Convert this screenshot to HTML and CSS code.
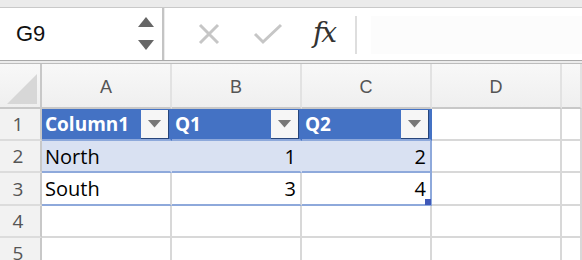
FILE: index.html
```html
<!DOCTYPE html>
<html lang="en">

<head>
    <meta charset="UTF-8">
    <meta name="viewport" content="width=device-width, initial-scale=1.0">
    <title>Sheet1</title>
    <link rel="stylesheet" href="styles.css">
</head>

<body>
    <div class="top-band"></div>

    <div class="formula-bar">
        <div class="name-box">
            <span class="cell-ref">G9</span>
            <svg class="spinner" width="18" height="36" viewBox="0 0 18 36">
                <polygon points="9,1 17,11 1,11" fill="#666" />
                <polygon points="1,24 17,24 9,34" fill="#666" />
            </svg>
        </div>
        <div class="fx-tools">
            <svg class="tool" width="26" height="26" viewBox="0 0 26 26">
                <path d="M4 4 L22 22 M22 4 L4 22" stroke="#c6c6c6" stroke-width="3" fill="none" />
            </svg>
            <svg class="tool" width="30" height="26" viewBox="0 0 30 26">
                <path d="M2 13 L10 21 L28 4" stroke="#c6c6c6" stroke-width="3" fill="none" />
            </svg>
            <span class="fx">fx</span>
        </div>
        <div class="formula-input"></div>
    </div>

    <div class="bar-rule"></div>

    <div class="sheet">
        <!-- column headers -->
        <div class="corner"><div class="corner-tri"></div></div>
        <div class="col-head">A</div>
        <div class="col-head">B</div>
        <div class="col-head">C</div>
        <div class="col-head">D</div>
        <div class="col-head"></div>

        <!-- row 1 -->
        <div class="row-head">1</div>
        <div class="cell t-head"><span>Column1</span><span class="filter"></span></div>
        <div class="cell t-head"><span>Q1</span><span class="filter"></span></div>
        <div class="cell t-head t-end"><span>Q2</span><span class="filter"></span></div>
        <div class="cell"></div>
        <div class="cell"></div>

        <!-- row 2 -->
        <div class="row-head">2</div>
        <div class="cell t-band">North</div>
        <div class="cell t-band num">1</div>
        <div class="cell t-band t-end num">2</div>
        <div class="cell"></div>
        <div class="cell"></div>

        <!-- row 3 -->
        <div class="row-head">3</div>
        <div class="cell t-row">South</div>
        <div class="cell t-row num">3</div>
        <div class="cell t-row t-end num">4<span class="handle"></span></div>
        <div class="cell"></div>
        <div class="cell"></div>

        <!-- row 4 -->
        <div class="row-head">4</div>
        <div class="cell"></div>
        <div class="cell"></div>
        <div class="cell"></div>
        <div class="cell"></div>
        <div class="cell"></div>

        <!-- row 5 -->
        <div class="row-head">5</div>
        <div class="cell"></div>
        <div class="cell"></div>
        <div class="cell"></div>
        <div class="cell"></div>
        <div class="cell"></div>
    </div>
</body>

</html>
```

FILE: styles.css
```css
body {
    margin: 0;
    width: 582px;
    height: 260px;
    overflow: hidden;
    background-color: #fff;
    font-family: "Open Sans", "Liberation Sans", sans-serif;
}

.top-band {
    height: 7px;
    background-color: #ebebeb;
    border-bottom: 1px solid #c9c9c9;
}

.formula-bar {
    height: 52px;
    display: flex;
    align-items: stretch;
    background-color: #fff;
}

.name-box {
    width: 164px;
    display: flex;
    align-items: center;
    justify-content: space-between;
    padding: 0 7px 0 16px;
    box-sizing: border-box;
    border-right: 2px solid #c4c4c4;
}

.cell-ref {
    font-family: "Liberation Sans", Arial, sans-serif;
    font-size: 22px;
    color: #111;
}

.spinner {
    margin-top: -1px;
}

.fx-tools {
    width: 191px;
    display: flex;
    align-items: center;
    padding-left: 31px;
    box-sizing: border-box;
    border-left: 1px solid #ececec;
}

.tool:first-child {
    margin-right: 31px;
}

.fx {
    margin-left: 30px;
    margin-top: -4px;
    font-family: "DejaVu Serif", "Liberation Serif", serif;
    font-style: italic;
    font-size: 28px;
    color: #333;
    letter-spacing: -2px;
}

.formula-input {
    flex: 1;
    margin: 8px 0 6px 0;
    padding-left: 14px;
    border-left: 2px solid #dedede;
    display: flex;
}

.formula-input::after {
    content: "";
    flex: 1;
    background-color: #fcfcfc;
}

.bar-rule {
    height: 2px;
    border-top: 1px solid #a9a9a9;
    border-bottom: 1px solid #bdbdbd;
    background-color: #ececec;
}

.sheet {
    display: grid;
    grid-template-columns: 42px 130px 130px 130px 130px 1fr;
    grid-template-rows: 45px 32px 32px 33px 32px 32px;
}

.corner,
.col-head,
.row-head,
.cell {
    box-sizing: border-box;
    border-right: 2px solid #d8d8d8;
    border-bottom: 2px solid #d8d8d8;
}

.corner,
.col-head {
    background: linear-gradient(#f8f8f8, #efefef);
    border-right-color: #e2e2e2;
    border-bottom-color: #c8c8c8;
}

.corner {
    border-right-color: #c8c8c8;
    display: flex;
    justify-content: flex-end;
    align-items: flex-end;
    padding: 0 3px 3px 0;
}

.corner-tri {
    width: 30px;
    height: 30px;
    background-color: #d7d7d7;
    clip-path: polygon(100% 0, 100% 100%, 0 100%);
}

.col-head {
    display: flex;
    align-items: center;
    justify-content: center;
    padding-top: 4px;
    font-family: "Liberation Sans", Arial, sans-serif;
    font-size: 18px;
    color: #555;
}

.row-head {
    background-color: #f2f2f2;
    border-right-color: #c8c8c8;
    border-bottom-color: #dcdcdc;
    display: flex;
    align-items: center;
    justify-content: center;
    padding-right: 4px;
    font-size: 19px;
    color: #555;
}

.cell {
    display: flex;
    align-items: center;
    padding: 0 4px 0 3px;
    font-size: 20px;
    color: #000;
}

.num {
    justify-content: flex-end;
}

.t-head {
    background-color: #4472c4;
    border-right-color: #4472c4;
    border-bottom-color: #8ea9db;
    justify-content: space-between;
    padding: 0 1px 0 3px;
    color: #fff;
    font-size: 19px;
    font-weight: bold;
}

.t-band {
    background-color: #d9e1f2;
    border-right-color: #d9e1f2;
    border-bottom-color: #8ea9db;
}

.t-row {
    border-bottom-color: #8ea9db;
}

.t-band.t-end,
.t-row.t-end {
    border-right-color: #8ea9db;
}

.filter {
    width: 28px;
    height: 29px;
    box-sizing: border-box;
    background-color: #f6f6f6;
    border-right: 1px solid #27457a;
    border-bottom: 1px solid #27457a;
    display: flex;
    align-items: center;
    justify-content: center;
}

.filter::after {
    content: "";
    width: 14px;
    height: 8px;
    background-color: #777;
    clip-path: polygon(0 0, 100% 0, 50% 100%);
}

.t-end {
    position: relative;
}

.handle {
    position: absolute;
    right: -1px;
    bottom: -1px;
    width: 6px;
    height: 6px;
    background-color: #3f58b8;
}
```
